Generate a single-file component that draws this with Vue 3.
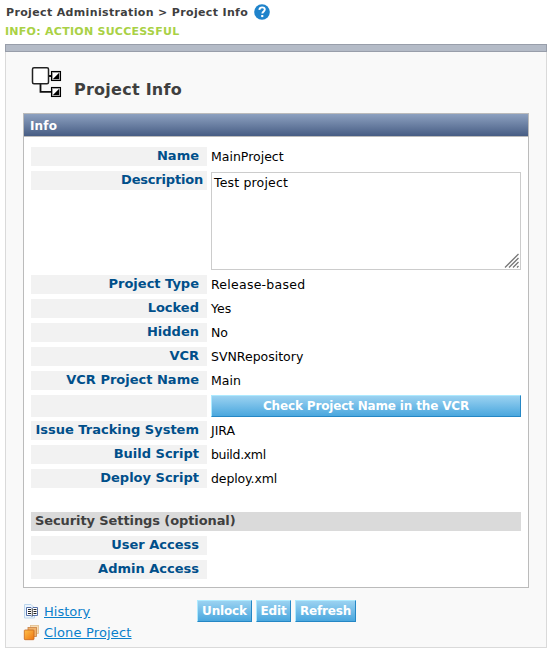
<script setup>
const rows = [
  { label: 'Name', value: 'MainProject' },
  { label: 'Description', value: 'Test project', kind: 'area' },
  { label: 'Project Type', value: 'Release-based', fit: 'loose' },
  { label: 'Locked', value: 'Yes' },
  { label: 'Hidden', value: 'No' },
  { label: 'VCR', value: 'SVNRepository' },
  { label: 'VCR Project Name', value: 'Main' },
  { label: '', value: 'Check Project Name in the VCR', kind: 'button' },
  { label: 'Issue Tracking System', value: 'JIRA' },
  { label: 'Build Script', value: 'build.xml', fit: 'tight' },
  { label: 'Deploy Script', value: 'deploy.xml', fit: 'snug' },
]
const access = ['User Access', 'Admin Access']
</script>

<template>
  <div class="page">
    <div class="crumb">
      <span>Project Administration &gt; Project Info</span>
      <svg class="help" width="16" height="16" viewBox="0 0 16 16">
        <circle cx="8" cy="8" r="7.8" fill="#1f83cb" />
        <path d="M5.3 5.8C5.6 4 6.7 3.4 8.1 3.4c1.700 0 2.700.9 2.700 2.200 0 1.700-2.300 1.900-2.500 3.900" fill="none" stroke="#fff" stroke-width="1.900" />
        <rect x="7.200" y="11" width="2.100" height="2.100" fill="#fff" />
      </svg>
    </div>
    <div class="message">INFO: ACTION SUCCESSFUL</div>
    <div class="bar"></div>
    <div class="panel">
      <div class="heading">
        <svg width="32" height="32" viewBox="0 0 32 32">
          <path d="M18 10h4M10.500 18v7.900H22" fill="none" stroke="#111" stroke-width="1.800" />
          <rect x="2.500" y="1.800" width="16" height="16" rx="1.500" fill="#fff" stroke="#222" stroke-width="1.500" />
          <g v-for="y in [5, 21]" :key="y">
            <rect x="21.500" :y="y + 0.500" width="9" height="9" fill="#aaa" stroke="#000" stroke-width="1.100" />
            <path :d="`M23 ${y + 8}V${y + 2}H29Z`" fill="#fff" />
            <path :d="`M23 ${y + 8}H29V${y + 2}Z`" fill="#000" />
          </g>
        </svg>
        <h1>Project Info</h1>
      </div>
      <section class="box">
        <div class="box-head"><span>Info</span></div>
        <div class="rows">
          <div v-for="r in rows" :key="r.label" class="row" :class="r.kind">
            <div class="label"><span>{{ r.label }}</span></div>
            <div v-if="r.kind === 'area'" class="field">
              <span>{{ r.value }}</span>
              <svg class="grip" width="15" height="15" viewBox="0 0 15 15">
                <path d="M1 14.500L14.500 1M5 14.500L14.500 5M9 14.500L14.500 9M13 14.500L14.500 13" stroke="#777" stroke-width="1.300" />
              </svg>
            </div>
            <button v-else-if="r.kind === 'button'" class="btn"><span>{{ r.value }}</span></button>
            <div v-else class="value" :class="r.fit">{{ r.value }}</div>
          </div>
          <div class="section">Security Settings (optional)</div>
          <div v-for="a in access" :key="a" class="row">
            <div class="label"><span>{{ a }}</span></div>
          </div>
        </div>
      </section>
      <footer class="foot">
        <div class="links">
          <a>
            <svg width="16" height="16" viewBox="0 0 16 16">
              <path d="M1.500.500H8l3.500 3.500v10H1.500Z" fill="#edf5fc" stroke="#bcd6ee" />
              <path d="M3.500 3.500h4.500l1 1 1-1h4.500v8h-4.500l-1 1-1-1h-4.500Z" fill="#fff" stroke="#5672aa" />
              <path d="M5 5.500h3M5 7.500h3M5 9.500h3M10.500 5.500h3M10.500 7.500h3M10.500 9.500h3" stroke="#222" />
              <path d="M9.300 4.500v7.500" stroke="#222" stroke-width=".8" />
            </svg>
            <span>History</span>
          </a>
          <a>
            <svg width="16" height="16" viewBox="0 0 16 16">
              <defs>
                <linearGradient id="cube" x1="0" y1="0" x2="1" y2="1">
                  <stop offset="0" stop-color="#ffc24d" />
                  <stop offset="1" stop-color="#ee7510" />
                </linearGradient>
              </defs>
              <rect x="7.500" y="0.500" width="8" height="8" fill="#f8ddb4" stroke="#e2bd8c" stroke-width=".8" />
              <rect x="5" y="2.500" width="8.500" height="9" fill="#efb36c" stroke="#c98044" stroke-width=".8" />
              <rect x="1.300" y="5" width="9.700" height="9.700" rx=".7" fill="url(#cube)" stroke="#c8651c" stroke-width=".8" />
            </svg>
            <span class="clone">Clone Project</span>
          </a>
        </div>
        <div class="buttons">
          <button class="btn unlock"><span>Unlock</span></button>
          <button class="btn edit"><span>Edit</span></button>
          <button class="btn refresh"><span>Refresh</span></button>
        </div>
      </footer>
    </div>
  </div>
</template>

<style>
body { background: #fff; }
</style>

<style scoped>
.page { box-sizing: border-box; width: 553px; height: 654px; padding: 4px 6px 0 5px; overflow: hidden; font-family: Verdana, "DejaVu Sans", sans-serif; font-size: 13px; color: #000; }
.crumb { display: flex; height: 18px; gap: 6px; padding-left: 1px; font-size: 11px; font-weight: bold; line-height: 17px; letter-spacing: .35px; color: #3f3f3f; white-space: nowrap; }
.message { height: 22px; font-size: 11px; font-weight: bold; line-height: 19px; letter-spacing: .27px; color: #a9d145; }
.bar { box-sizing: border-box; height: 8px; border: 1px solid #989eaa; background: #b4bbc7; }
.panel { box-sizing: border-box; height: 596px; border: 1px solid #dadada; border-top: 0; background: #f9f9f9; padding: 14px 17px 0 17px; }
.heading { display: flex; height: 47px; padding-left: 7px; gap: 12px; }
.heading h1 { margin: 13px 0 0; font-size: 16px; line-height: 21px; letter-spacing: .25px; color: #3f3f3f; }
.box { box-sizing: border-box; height: 475px; border: 1px solid #bbb; background: #fff; }
.box-head { height: 22px; border-bottom: 1px solid #bbb; padding-left: 6px; background: linear-gradient(#8da1c0, #475d84); color: #fff; font-weight: bold; font-size: 12px; line-height: 24px; letter-spacing: .15px; }
.rows { display: flex; flex-direction: column; gap: 5px; padding: 10px 7px 0; }
.row { display: grid; grid-template-columns: 176px 310px; column-gap: 4px; height: 19px; }
.row.area { height: 99px; }
.label { box-sizing: border-box; height: 19px; padding-right: 8px; background: #f2f2f2; color: #004f8a; font-weight: bold; font-size: 13px; line-height: 17px; text-align: right; white-space: nowrap; }
.value { line-height: 19px; font-size: 12.5px; white-space: nowrap; }
.loose { letter-spacing: .25px; }
.snug { letter-spacing: -.12px; }
.tight { letter-spacing: -.32px; }
.field { position: relative; box-sizing: border-box; height: 98px; margin-top: 1px; border: 1px solid #ccc; padding: 1px 2px; line-height: 18px; font-size: 12.5px; letter-spacing: .17px; }
.area .label { padding-right: 4px; letter-spacing: -.2px; }
.grip { position: absolute; right: 1px; bottom: 1px; }
.row.button { height: 22px; margin-bottom: -1px; }
.row.button .label { height: 22px; }
.btn { display: block; box-sizing: border-box; height: 22px; margin: 0; padding: 0; border: 1px solid #2587c5; border-top-color: #aeeaff; border-left-color: #aeeaff; background: linear-gradient(#9bd2f1, #4aa7de); color: #fff; font: bold 12px/19px Verdana, "DejaVu Sans", sans-serif; letter-spacing: -.16px; text-align: center; white-space: nowrap; }
.section { height: 19px; margin-top: 19px; padding-left: 4px; background: #dadada; color: #3f3f3f; font-size: 13px; font-weight: bold; line-height: 17px; letter-spacing: -.1px; }
.foot { display: flex; padding-top: 12px; }
.links { width: 174px; padding-top: 3px; }
.links a { display: flex; gap: 5px; height: 21px; color: #0a80cb; text-decoration: underline; line-height: 18px; white-space: nowrap; }
.links svg { margin-top: 1px; }
.clone { letter-spacing: .16px; }
.buttons { display: flex; gap: 4px; }
.unlock { width: 55px; }
.edit { width: 35px; }
.refresh { width: 61px; }
</style>
